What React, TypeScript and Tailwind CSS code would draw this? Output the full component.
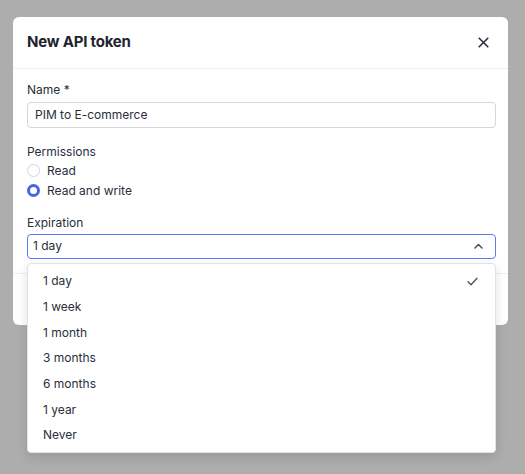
import React, { useState } from 'react';

const OPTIONS = ['1 day', '1 week', '1 month', '3 months', '6 months', '1 year', 'Never'];

export default function App() {
  const [name, setName] = useState('PIM to E-commerce');
  const [perm, setPerm] = useState<'read' | 'write'>('write');
  const [expiration, setExpiration] = useState('1 day');

  return (
    <div className="min-h-[474px] w-full bg-[#adadad] pt-[17px] px-[13px] pb-4 font-['Inter',sans-serif] text-[#1f2330]">
      <div className="bg-white rounded-md w-[495px]">
        {/* header */}
        <div className="h-[52px] flex items-center justify-between pl-[14px] pr-[15px] border-b border-[#eeeff2]">
          <h2 className="text-[15px] font-bold tracking-[-0.2px]">New API token</h2>
          <button className="w-5 h-5 flex items-center justify-center text-[#2c3140]">
            <svg width="11" height="11" viewBox="0 0 11 11" fill="none" stroke="currentColor" strokeWidth="1.6" strokeLinecap="round">
              <path d="M1.2 1.2l8.6 8.6M9.8 1.2l-8.6 8.6" />
            </svg>
          </button>
        </div>

        {/* body */}
        <div className="pl-[14px] pr-[12px] pt-[13px] pb-[14px]">
          <label className="block text-[12px] leading-[15px] mb-[4px] text-[#2a2e3b]">Name *</label>
          <input
            value={name}
            onChange={e => setName(e.target.value)}
            className="w-full h-[26px] border border-[#d4d6dc] rounded-[4px] px-[7px] text-[12px] text-[#2a2e3b] outline-none"
          />

          <p className="text-[12px] leading-[15px] mt-[16px] text-[#2a2e3b]">Permissions</p>
          <div className="mt-[5px] flex flex-col gap-[7px]">
            {[
              { id: 'read', label: 'Read' },
              { id: 'write', label: 'Read and write' },
            ].map(o => (
              <label key={o.id} className="flex items-center gap-[7px] text-[12px] leading-[13px] cursor-pointer text-[#2a2e3b]" onClick={() => setPerm(o.id as 'read' | 'write')}>
                {perm === o.id ? (
                  <span className="w-[13px] h-[13px] rounded-full border-[3.5px] border-[#4565e8] bg-white" />
                ) : (
                  <span className="w-[13px] h-[13px] rounded-full border border-[#cfd2d9] bg-white" />
                )}
                {o.label}
              </label>
            ))}
          </div>

          <p className="text-[12px] leading-[15px] mt-[18px] text-[#2a2e3b]">Expiration</p>
          <div className="relative mt-[4px]">
            <div className="h-[25px] border border-[#5b7cf0] rounded-[4px] pl-[5px] pr-[12px] flex items-center justify-between text-[12px] text-[#2a2e3b]">
              <span>{expiration}</span>
              <svg width="9" height="6" viewBox="0 0 9 6" fill="none" stroke="#4a4f5c" strokeWidth="1.5" strokeLinecap="round" strokeLinejoin="round">
                <path d="M1 5l3.5-3.5L8 5" />
              </svg>
            </div>

            {/* open listbox */}
            <ul className="absolute z-10 left-0 right-0 top-[29px] bg-white border border-[#e1e3e8] rounded-[4px] pt-[5px] pb-[4px] shadow-[0_4px_12px_rgba(0,0,0,0.12)]">
              {OPTIONS.map(opt => (
                <li
                  key={opt}
                  onClick={() => setExpiration(opt)}
                  className="h-[25.7px] flex items-center justify-between pl-[15px] pr-[17px] text-[12px] text-[#2a2e3b] cursor-pointer"
                >
                  <span>{opt}</span>
                  {opt === expiration && (
                    <svg width="11" height="9" viewBox="0 0 11 9" fill="none" stroke="#4a4f5c" strokeWidth="1.3" strokeLinecap="round" strokeLinejoin="round">
                      <path d="M1 4.8l3 3L10 1.2" />
                    </svg>
                  )}
                </li>
              ))}
            </ul>
          </div>
        </div>

        {/* footer (covered by listbox) */}
        <div className="h-[52px] border-t border-[#eeeff2] px-[14px] flex items-center justify-end gap-2">
          <button className="h-[28px] px-3 text-[12px] rounded border border-[#d4d6dc]">Cancel</button>
          <button className="h-[28px] px-3 text-[12px] rounded bg-[#4565e8] text-white">Create</button>
        </div>
      </div>
    </div>
  );
}
